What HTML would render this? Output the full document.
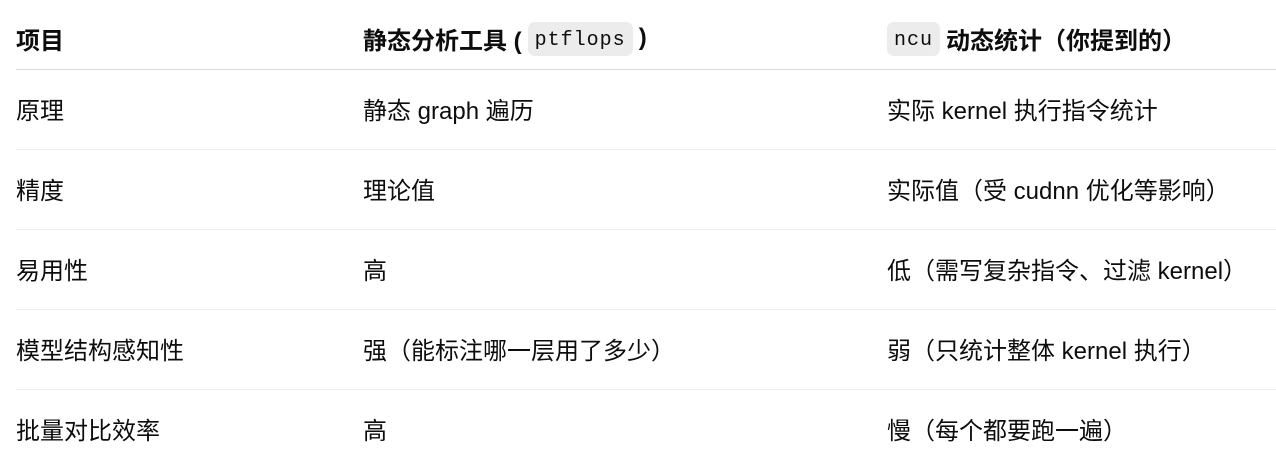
<!DOCTYPE html>
<html><head><meta charset="utf-8"><style>
body{margin:0;background:#fff;width:1276px;height:464px;overflow:hidden;font-family:"Liberation Sans","Noto Sans CJK SC",sans-serif;color:#0d0d0d;font-size:24px}
.row{position:absolute;left:16px;right:0;height:80px}
.row div{position:absolute;top:-2px;height:100%;display:flex;align-items:center;white-space:nowrap}
.c1{left:0}.c2{left:347px}.c3{left:871px}
.h{font-weight:bold}
code{display:inline-block;font-family:"Liberation Mono",monospace;font-weight:normal;font-size:20px;letter-spacing:1px;line-height:30px;height:30px;padding:4px 7px 0;background:#ececec;border-radius:7px;margin:2px 6px 0}
.line{position:absolute;left:16px;right:0;height:1px;background:#ededed}
</style></head><body>
<div class="row h" style="top:0;height:80px"><div class="c1">项目</div><div class="c2">静态分析工具 (<code>ptflops</code>)</div><div class="c3"><code style="margin-left:0">ncu</code>动态统计（你提到的）</div></div>
<div class="line" style="top:69px;background:#d9d9d9"></div>
<div class="row" style="top:70px"><div class="c1">原理</div><div class="c2">静态 graph 遍历</div><div class="c3">实际 kernel 执行指令统计</div></div>
<div class="line" style="top:149px"></div>
<div class="row" style="top:150px"><div class="c1">精度</div><div class="c2">理论值</div><div class="c3">实际值（受 cudnn 优化等影响）</div></div>
<div class="line" style="top:229px"></div>
<div class="row" style="top:230px"><div class="c1">易用性</div><div class="c2">高</div><div class="c3">低（需写复杂指令、过滤 kernel）</div></div>
<div class="line" style="top:309px"></div>
<div class="row" style="top:310px"><div class="c1">模型结构感知性</div><div class="c2">强（能标注哪一层用了多少）</div><div class="c3">弱（只统计整体 kernel 执行）</div></div>
<div class="line" style="top:389px"></div>
<div class="row" style="top:390px"><div class="c1">批量对比效率</div><div class="c2">高</div><div class="c3">慢（每个都要跑一遍）</div></div>
</body></html>
